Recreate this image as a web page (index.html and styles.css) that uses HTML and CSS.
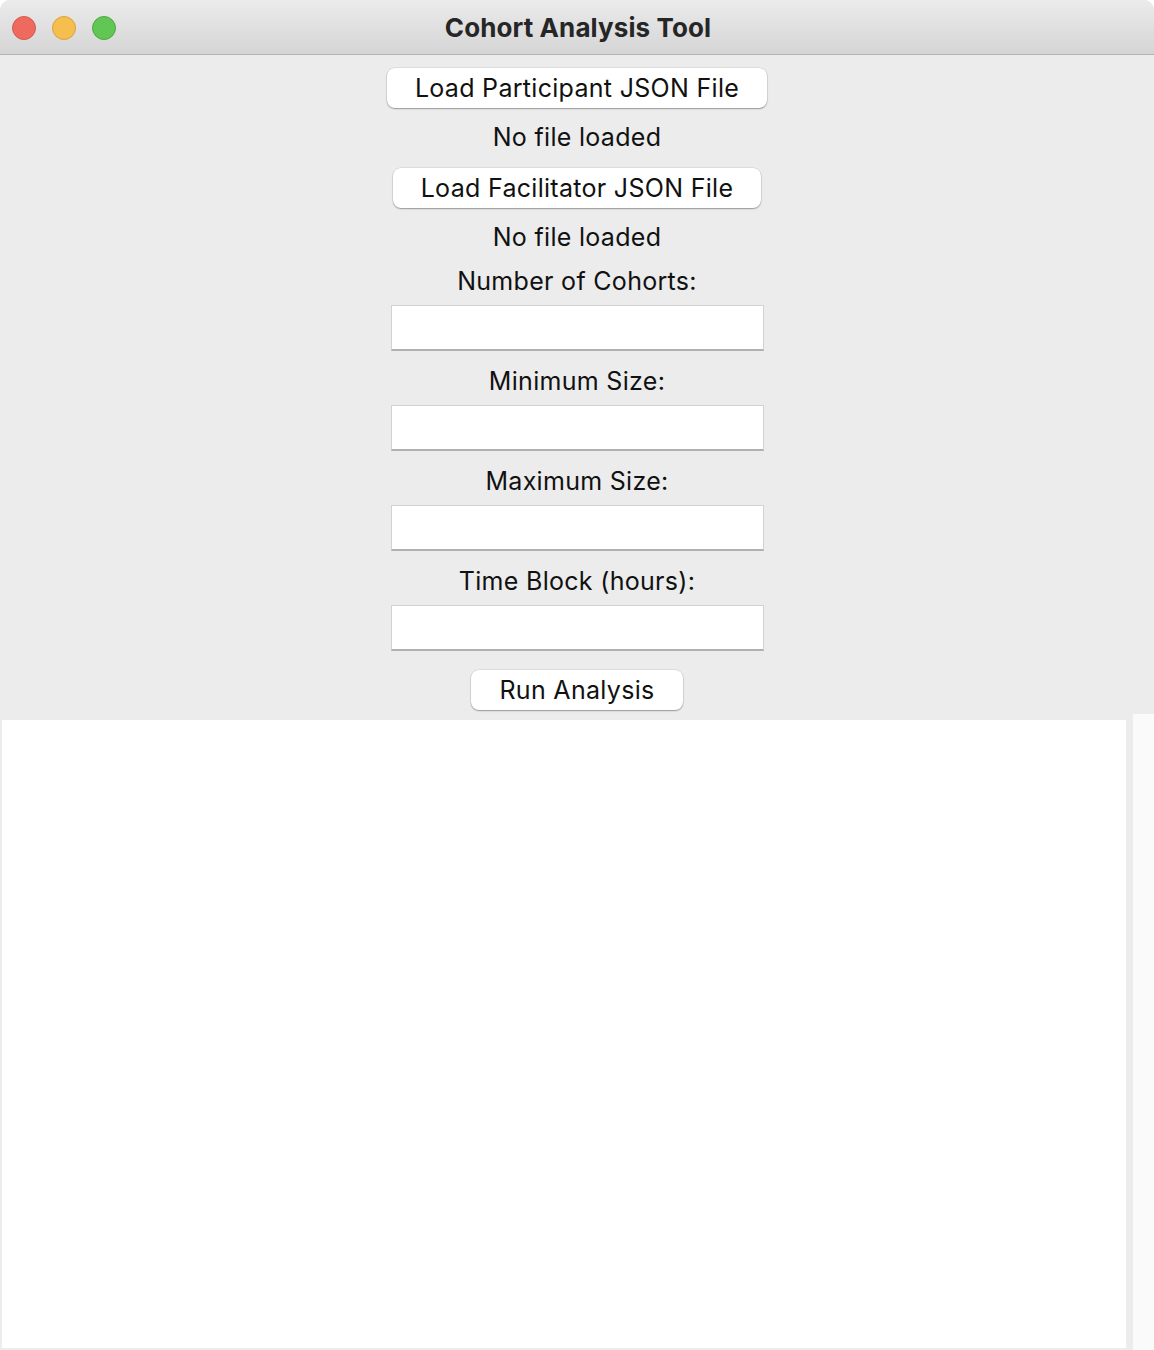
FILE: index.html
```html
<!DOCTYPE html>
<html lang="en">
<head>
<meta charset="utf-8">
<title>Cohort Analysis Tool</title>
<link rel="stylesheet" href="styles.css">
</head>
<body>
<div class="window">
  <header class="titlebar">
    <div class="lights">
      <span class="light red"></span>
      <span class="light yellow"></span>
      <span class="light green"></span>
    </div>
    <h1 class="title">Cohort Analysis Tool</h1>
  </header>
  <main class="content">
    <div class="form">
      <button class="btn btn-first">Load Participant JSON File</button>
      <div class="status status-first">No file loaded</div>
      <button class="btn btn-second">Load Facilitator JSON File</button>
      <div class="status status-second">No file loaded</div>
      <label class="field-label field-label-first">Number of Cohorts:</label>
      <input class="entry" type="text">
      <label class="field-label">Minimum Size:</label>
      <input class="entry" type="text">
      <label class="field-label">Maximum Size:</label>
      <input class="entry" type="text">
      <label class="field-label">Time Block (hours):</label>
      <input class="entry" type="text">
      <button class="btn btn-run">Run Analysis</button>
    </div>
    <div class="output">
      <div class="textarea"></div>
      <div class="scrollbar"></div>
    </div>
  </main>
</div>
</body>
</html>
```

FILE: styles.css
```css
* { box-sizing: border-box; }
html, body {
  margin: 0;
  padding: 0;
  background: #ffffff;
  width: 1154px;
  height: 1350px;
  overflow: hidden;
}
.window {
  width: 1154px;
  height: 1350px;
  display: flex;
  flex-direction: column;
  background: #ececec;
  border-radius: 10px 10px 0 0;
  overflow: hidden;
  font-family: "Inter", "Liberation Sans", sans-serif;
  color: #111;
}
.titlebar {
  height: 55px;
  flex: 0 0 55px;
  display: flex;
  align-items: center;
  justify-content: center;
  position: relative;
  background: linear-gradient(#ebebeb, #d5d5d5);
  border-bottom: 1px solid #b4b4b4;
}
.lights {
  position: absolute;
  left: 12px;
  top: 16px;
  display: flex;
  gap: 16px;
}
.light {
  width: 24px;
  height: 24px;
  border-radius: 50%;
  display: block;
}
.red { background: #ee6a5f; border: 1px solid #d35a50; }
.yellow { background: #f6be4f; border: 1px solid #d9a13a; }
.green { background: #62c655; border: 1px solid #4ea843; }
.title {
  margin: 0;
  font-size: 26px;
  font-weight: 700;
  color: #262626;
  letter-spacing: 0.1px;
  padding-left: 2px;
}
.content {
  flex: 1;
  display: flex;
  flex-direction: column;
}
.form {
  display: flex;
  flex-direction: column;
  align-items: center;
  padding-top: 13px;
}
.btn {
  height: 40px;
  padding: 0 28px;
  background: #ffffff;
  border: none;
  border-radius: 8px;
  box-shadow: 0 1px 1.5px rgba(0,0,0,0.32), 0 0 0 0.5px rgba(0,0,0,0.12);
  font-family: inherit;
  font-size: 25px;
  letter-spacing: 0.3px;
  color: #111;
  line-height: 40px;
}
.status, .field-label {
  height: 30px;
  line-height: 30px;
  font-size: 25px;
  letter-spacing: 0.3px;
  color: #111;
  text-align: center;
}
.status-first { margin-top: 14px; margin-bottom: 16px; }
.status-second { margin-top: 14px; }
.field-label { margin-top: 15px; }
.field-label-first { margin-top: 14px; }
.entry {
  margin-top: 9px;
  width: 373px;
  height: 46px;
  background: #ffffff;
  border: 1px solid #d2d2d2;
  border-bottom: 2px solid #b0b0b0;
  border-radius: 0;
  outline: none;
  font-family: inherit;
  font-size: 24px;
}
.btn-run {
  margin-top: 19px;
}
.output {
  flex: 1;
  display: flex;
  margin-top: 4px;
}
.textarea {
  margin: 6px 0 2px 2px;
  width: 1124px;
  background: #ffffff;
}
.scrollbar {
  margin-left: 7px;
  flex: 1;
  background: #fafafa;
}
```
